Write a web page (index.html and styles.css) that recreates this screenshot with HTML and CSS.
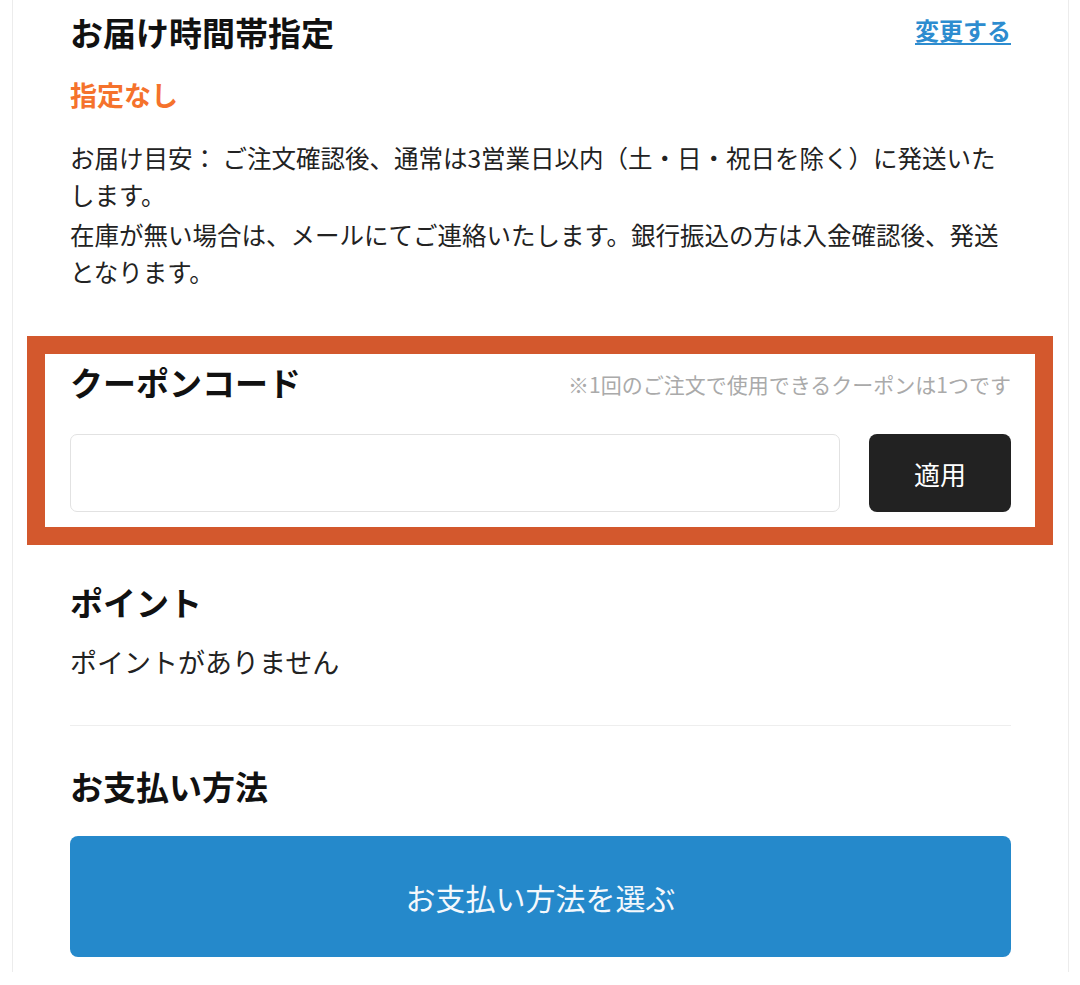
FILE: index.html
```html
<!DOCTYPE html>
<html lang="ja">
<head>
<meta charset="utf-8">
<title>注文確認</title>
<link rel="stylesheet" href="styles.css">
</head>
<body>
<div class="page">
  <section class="delivery">
    <div class="row-head">
      <h2 class="title">お届け時間帯指定</h2>
      <a class="change-link" href="#">変更する</a>
    </div>
    <div class="status">指定なし</div>
    <div class="note">
      <p>お届け目安： ご注文確認後、通常は3営業日以内（土・日・祝日を除く）に発送いたします。</p>
      <p class="note-second">在庫が無い場合は、メールにてご連絡いたします。銀行振込の方は入金確認後、発送となります。</p>
    </div>
  </section>

  <section class="coupon">
    <div class="row-head">
      <h2 class="title">クーポンコード</h2>
      <span class="coupon-hint">※1回のご注文で使用できるクーポンは1つです</span>
    </div>
    <div class="coupon-form">
      <input class="coupon-input" type="text" aria-label="クーポンコード">
      <button class="apply-btn" type="button">適用</button>
    </div>
  </section>

  <section class="points">
    <h2 class="title">ポイント</h2>
    <p class="points-text">ポイントがありません</p>
  </section>

  <hr class="divider">

  <section class="payment">
    <h2 class="title">お支払い方法</h2>
    <button class="pay-btn" type="button">お支払い方法を選ぶ</button>
  </section>
</div>
</body>
</html>
```

FILE: styles.css
```css
* { box-sizing: border-box; }

html, body {
  margin: 0;
  padding: 0;
  background: #ffffff;
}

body {
  font-family: "Noto Sans CJK JP", "Noto Sans", "Liberation Sans", sans-serif;
  color: #222222;
}

.page {
  margin-left: 12px;
  width: 1057px;
  border-left: 1px solid #ececec;
  border-right: 1px solid #ececec;
  padding: 12px 57px 15px;
}

.row-head {
  display: flex;
  justify-content: space-between;
  align-items: center;
}

.title {
  margin: 0;
  font-size: 33px;
  line-height: 40px;
  font-weight: 700;
  color: #111111;
}

.change-link {
  font-size: 24px;
  line-height: 32px;
  font-weight: 700;
  color: #2d8ccf;
  text-decoration: underline;
  text-underline-offset: 3px;
  margin-top: -4px;
}

.status {
  margin-top: 25px;
  font-size: 27px;
  line-height: 36px;
  font-weight: 700;
  color: #f5722c;
}

.note {
  margin-top: 26px;
  font-size: 24.5px;
  line-height: 37px;
  color: #222222;
}

.note p { margin: 0; }
.note .note-second { margin-top: 3px; }

.coupon {
  margin: 46px -42px 0 -43px;
  border: 18px solid #d3582d;
  padding: 8px 24px 15px 25px;
}

.coupon-hint {
  font-size: 21px;
  line-height: 28px;
  color: #aaaaaa;
  margin-top: 4px;
}

.coupon-form {
  display: flex;
  gap: 29px;
  margin-top: 32px;
}

.coupon-input {
  flex: 1;
  height: 78px;
  border: 1px solid #e2e2e2;
  border-radius: 7px;
  background: #ffffff;
  font: inherit;
  font-size: 24px;
  padding: 0 16px;
  outline: none;
}

.apply-btn {
  width: 142px;
  height: 78px;
  border: 0;
  border-radius: 8px;
  background: #222222;
  color: #ffffff;
  font-family: inherit;
  font-size: 26px;
  font-weight: 400;
  cursor: pointer;
}

.points {
  margin-top: 37px;
}

.points-text {
  margin: 21px 0 0;
  font-size: 27px;
  line-height: 38px;
  color: #222222;
}

.divider {
  margin: 44px 0 0;
  border: 0;
  border-top: 1px solid #eeeeee;
  height: 0;
}

.payment {
  margin-top: 40px;
}

.pay-btn {
  display: block;
  width: 100%;
  height: 121px;
  margin-top: 30px;
  border: 0;
  border-radius: 8px;
  background: #2589cb;
  color: #f4f8fc;
  font-family: inherit;
  font-size: 30px;
  font-weight: 400;
  cursor: pointer;
}
```
